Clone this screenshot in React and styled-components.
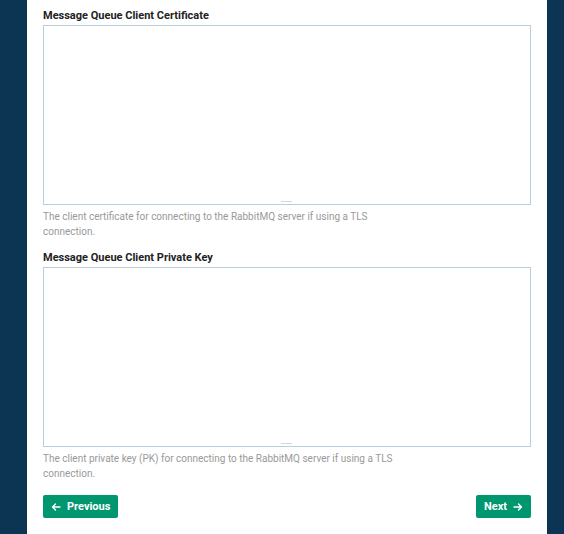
import React from "react";
import styled, { createGlobalStyle } from "styled-components";

const Global = createGlobalStyle`
  html, body { margin: 0; padding: 0; background: #0b3552; }
  body { font-family: Roboto, "Liberation Sans", sans-serif; }
`;

const Page = styled.div`
  width: 564px; height: 534px; overflow: hidden; background: #0b3552;
  display: flex; padding-left: 27px; box-sizing: border-box;
`;
const Panel = styled.div`
  width: 488px; padding: 9px 16px 0; background: #fff;
  display: flex; flex-direction: column;
`;
const Field = styled.div`
  display: flex; flex-direction: column; margin-bottom: 12px;
`;
const Label = styled.label`
  font-size: 11px; font-weight: 700; color: #222; line-height: 14px; margin-bottom: 2px;
`;
const AreaWrap = styled.div`
  position: relative; height: 180px;
  &::after {
    content: ""; position: absolute; left: 238px; bottom: 3px;
    width: 11px; height: 1px; background: #c5dbe6;
  }
`;
const Area = styled.textarea`
  box-sizing: border-box; width: 100%; height: 100%; resize: none;
  border: 1px solid #b9cedb; border-radius: 0; outline: none; margin: 0;
`;
const Help = styled.p`
  margin: 4px 0 0; font-size: 10px; line-height: 15px; color: #999; max-width: 355px;
`;
const Actions = styled.div`
  display: flex; justify-content: space-between; margin-top: 2px;
`;
const Button = styled.button`
  height: 23px; padding: 0 8px; border: 0; border-radius: 2px; background: #00966f;
  color: #fff; font-family: inherit; font-size: 11px; font-weight: 700;
  display: flex; align-items: center; gap: 6px; cursor: pointer;
`;
const Arrow = ({ dir }) => (
  <svg width="10" height="10" viewBox="0 0 10 10" fill="none" stroke="#fff" strokeWidth="1.4" strokeLinecap="round" strokeLinejoin="round">
    {dir === "left" ? <path d="M9 5H1.5M4.5 2L1.5 5l3 3" /> : <path d="M1 5h7.5M5.5 2l3 3-3 3" />}
  </svg>
);

export default function App() {
  return (
    <Page>
      <Global />
      <Panel>
        <Field>
          <Label>Message Queue Client Certificate</Label>
          <AreaWrap><Area /></AreaWrap>
          <Help>The client certificate for connecting to the RabbitMQ server if using a TLS connection.</Help>
        </Field>
        <Field>
          <Label>Message Queue Client Private Key</Label>
          <AreaWrap><Area /></AreaWrap>
          <Help>The client private key (PK) for connecting to the RabbitMQ server if using a TLS connection.</Help>
        </Field>
        <Actions>
          <Button><Arrow dir="left" />Previous</Button>
          <Button>Next<Arrow dir="right" /></Button>
        </Actions>
      </Panel>
    </Page>
  );
}
